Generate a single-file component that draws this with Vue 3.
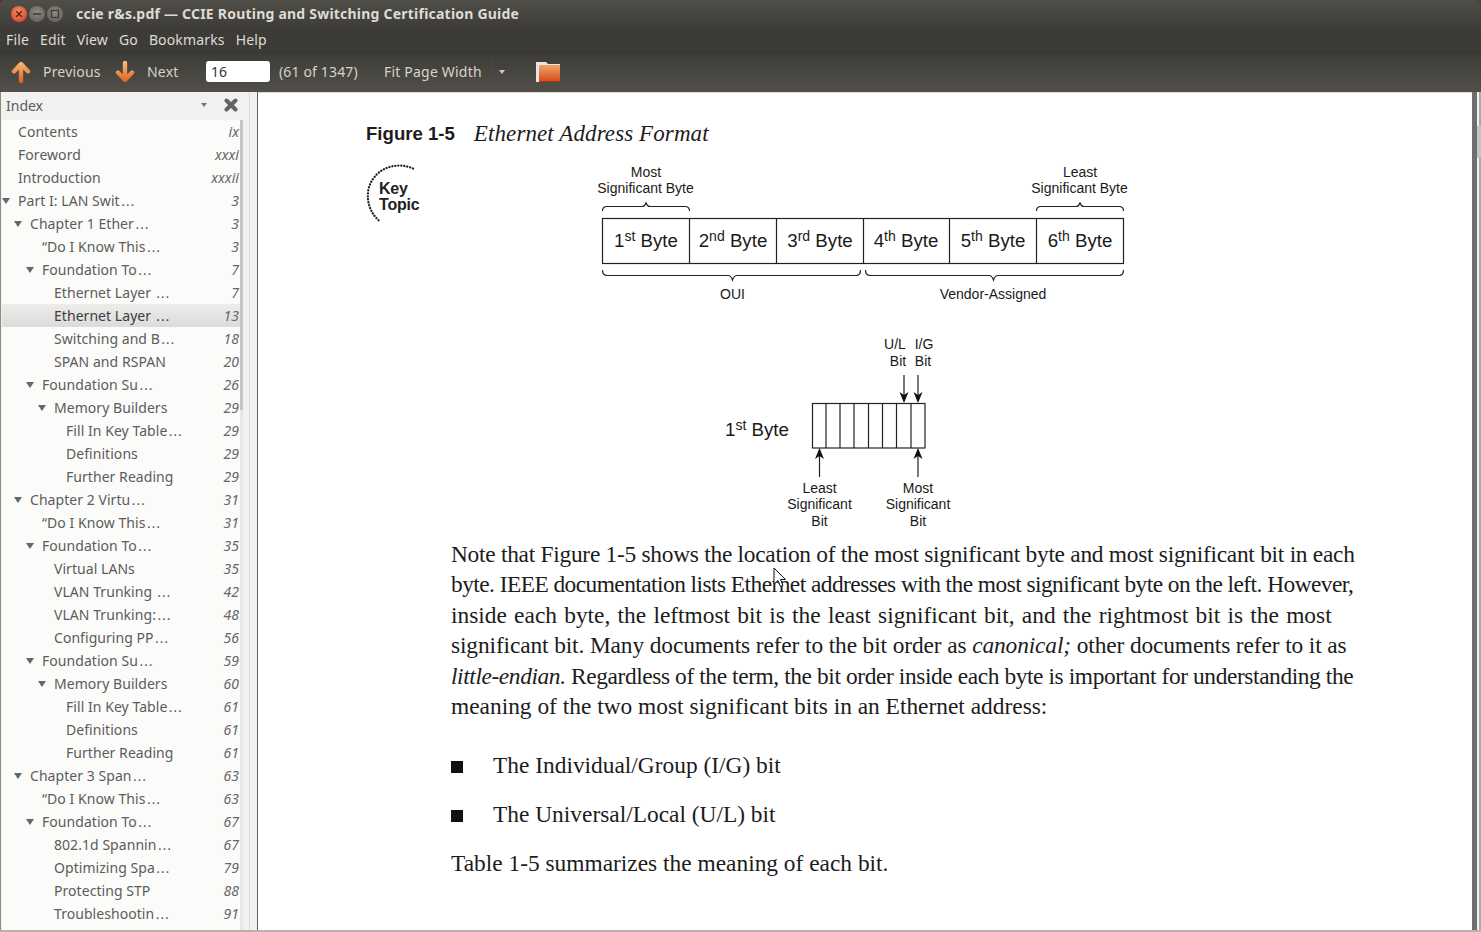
<script setup>
const rows = [
  { d: 0, t: 'Contents', p: 'ix' },
  { d: 0, t: 'Foreword', p: 'xxxi' },
  { d: 0, t: 'Introduction', p: 'xxxii' },
  { d: 0, t: 'Part I: LAN Swit', more: true, p: '3', open: true },
  { d: 1, t: 'Chapter 1 Ether', more: true, p: '3', open: true },
  { d: 2, t: '“Do I Know This', more: true, p: '3' },
  { d: 2, t: 'Foundation To', more: true, p: '7', open: true },
  { d: 3, t: 'Ethernet Layer ', more: true, p: '7' },
  { d: 3, t: 'Ethernet Layer ', more: true, p: '13', sel: true },
  { d: 3, t: 'Switching and B', more: true, p: '18' },
  { d: 3, t: 'SPAN and RSPAN', p: '20' },
  { d: 2, t: 'Foundation Su', more: true, p: '26', open: true },
  { d: 3, t: 'Memory Builders', p: '29', open: true },
  { d: 4, t: 'Fill In Key Table', more: true, p: '29' },
  { d: 4, t: 'Definitions', p: '29' },
  { d: 4, t: 'Further Reading', p: '29' },
  { d: 1, t: 'Chapter 2 Virtu', more: true, p: '31', open: true },
  { d: 2, t: '“Do I Know This', more: true, p: '31' },
  { d: 2, t: 'Foundation To', more: true, p: '35', open: true },
  { d: 3, t: 'Virtual LANs', p: '35' },
  { d: 3, t: 'VLAN Trunking ', more: true, p: '42' },
  { d: 3, t: 'VLAN Trunking:', more: true, p: '48' },
  { d: 3, t: 'Configuring PP', more: true, p: '56' },
  { d: 2, t: 'Foundation Su', more: true, p: '59', open: true },
  { d: 3, t: 'Memory Builders', p: '60', open: true },
  { d: 4, t: 'Fill In Key Table', more: true, p: '61' },
  { d: 4, t: 'Definitions', p: '61' },
  { d: 4, t: 'Further Reading', p: '61' },
  { d: 1, t: 'Chapter 3 Span', more: true, p: '63', open: true },
  { d: 2, t: '“Do I Know This', more: true, p: '63' },
  { d: 2, t: 'Foundation To', more: true, p: '67', open: true },
  { d: 3, t: '802.1d Spannin', more: true, p: '67' },
  { d: 3, t: 'Optimizing Spa', more: true, p: '79' },
  { d: 3, t: 'Protecting STP', p: '88' },
  { d: 3, t: 'Troubleshootin', more: true, p: '91' },
];

const menus = ['File', 'Edit', 'View', 'Go', 'Bookmarks', 'Help'];

const bytes = [
  { x: 646, n: '1', s: 'st' },
  { x: 733, n: '2', s: 'nd' },
  { x: 820, n: '3', s: 'rd' },
  { x: 906, n: '4', s: 'th' },
  { x: 993, n: '5', s: 'th' },
  { x: 1080, n: '6', s: 'th' },
];
const dividers = [689, 776, 863, 949, 1036];
const bits = [826, 840, 854, 868.5, 882.5, 896.5, 911];
</script>

<template>
  <div class="win">
    <header class="chrome">
      <div class="titlebar">
        <div class="btns">
          <svg width="54" height="18" viewBox="0 0 54 18">
            <defs>
              <radialGradient id="red" cx=".45" cy=".35" r=".7">
                <stop offset="0" stop-color="#f28a5c" />
                <stop offset="1" stop-color="#d9482b" />
              </radialGradient>
              <radialGradient id="grey" cx=".5" cy=".4" r=".7">
                <stop offset="0" stop-color="#8e8b83" />
                <stop offset="1" stop-color="#5f5d57" />
              </radialGradient>
            </defs>
            <circle cx="9" cy="9" r="8" fill="url(#red)" />
            <path d="M6.3 6.3 L11.7 11.7 M11.7 6.3 L6.3 11.7" stroke="#5a2012" stroke-width="1.4" />
            <circle cx="27" cy="9" r="8" fill="url(#grey)" />
            <path d="M23 9 H31" stroke="#3c3b37" stroke-width="1.6" />
            <circle cx="45" cy="9" r="8" fill="url(#grey)" />
            <rect x="41.5" y="5.5" width="7" height="7" fill="none" stroke="#3c3b37" stroke-width="1.3" />
          </svg>
        </div>
        <span class="title">ccie r&amp;s.pdf — CCIE Routing and Switching Certification Guide</span>
      </div>
      <nav class="menubar">
        <span v-for="m in menus" :key="m">{{ m }}</span>
      </nav>
      <div class="toolbar">
        <svg class="arrow" width="20" height="24" viewBox="0 0 20 24">
          <defs>
            <linearGradient id="up" gradientUnits="userSpaceOnUse" x1="0" y1="2" x2="0" y2="23">
              <stop offset="0" stop-color="#f9b878" />
              <stop offset="1" stop-color="#dc5f1c" />
            </linearGradient>
          </defs>
          <path d="M10 21 V5 M3 11.5 L10 4 L17 11.5" fill="none" stroke="url(#up)" stroke-width="4.4" stroke-linecap="round" stroke-linejoin="round" />
        </svg>
        <span class="tb-label prev">Previous</span>
        <svg class="arrow" width="20" height="24" viewBox="0 0 20 24">
          <path d="M10 3 V19 M3 12.5 L10 20 L17 12.5" fill="none" stroke="url(#up)" stroke-width="4.4" stroke-linecap="round" stroke-linejoin="round" />
        </svg>
        <span class="tb-label next">Next</span>
        <i class="sep"></i>
        <input class="page-input" value="16" />
        <span class="tb-label count">(61 of 1347)</span>
        <i class="sep"></i>
        <span class="tb-label zoom">Fit Page Width</span>
        <i class="sep small"></i>
        <span class="caret"></span>
        <i class="sep last"></i>
        <svg class="folder" width="24" height="22" viewBox="0 0 24 22">
          <defs>
            <linearGradient id="fold" x1="0" y1="0" x2="0" y2="1">
              <stop offset="0" stop-color="#f2a468" />
              <stop offset="1" stop-color="#d2491a" />
            </linearGradient>
          </defs>
          <path d="M0 1 H10 L12 3 H24 V21 H0 Z" fill="#e9e6e0" />
          <rect x="3" y="4" width="21" height="17" fill="url(#fold)" />
          <rect x="3" y="20" width="21" height="1" fill="#a83a14" />
        </svg>
      </div>
    </header>

    <main class="body">
      <aside class="side">
        <div class="side-head">
          <span class="side-title">Index</span>
          <span class="side-caret"></span>
          <svg class="side-x" width="14" height="14" viewBox="0 0 14 14">
            <path d="M2.5 2.5 L11.5 11.5 M11.5 2.5 L2.5 11.5" stroke="#636361" stroke-width="4" stroke-linecap="round" />
          </svg>
        </div>
        <div class="side-list">
          <div class="tree">
            <div v-for="(r, i) in rows" :key="i" class="row" :class="{ sel: r.sel, ['d' + r.d]: true }">
              <span v-if="r.open" class="tri"></span>
              <span class="lbl">{{ r.t }}<span v-if="r.more" class="ell">…</span></span>
              <em class="pg">{{ r.p }}</em>
            </div>
          </div>
          <div class="tree-scroll"></div>
        </div>
      </aside>

      <section class="doc">
        <div class="page">
          <h2 class="fig-head"><b>Figure 1-5</b><i>Ethernet Address Format</i></h2>
          <svg class="figure" width="800" height="376" viewBox="360 158 800 376">
            <path class="arc" d="M413 168.5 C396 161 374 168 368.5 189 C366 203 371 214 380 221.5" />
            <text class="kt" x="379" y="193.5">Key</text>
            <text class="kt" x="379" y="209.5">Topic</text>

            <text class="s" x="646" y="177" text-anchor="middle">Most</text>
            <text class="s" x="645.5" y="193" text-anchor="middle">Significant Byte</text>
            <text class="s" x="1080" y="177" text-anchor="middle">Least</text>
            <text class="s" x="1079.5" y="193" text-anchor="middle">Significant Byte</text>

            <path class="ln" d="M602.5 211 Q602.5 206.5 607 206.5 H642 Q645 206.5 646 202.5 Q647 206.5 650 206.5 H685 Q689.5 206.5 689.5 211" />
            <path class="ln" d="M1036.5 211 Q1036.5 206.5 1041 206.5 H1076 Q1079 206.5 1080 202.5 Q1081 206.5 1084 206.5 H1119 Q1123.5 206.5 1123.5 211" />

            <rect class="ln" x="602.5" y="218.5" width="521" height="45" />
            <line v-for="d in dividers" :key="d" class="ln" :x1="d + .5" :x2="d + .5" y1="218.5" y2="263.5" />
            <text v-for="b in bytes" :key="b.x" class="b" :x="b.x" y="247" text-anchor="middle">{{ b.n }}<tspan class="sup" dy="-6">{{ b.s }}</tspan><tspan dy="6"> Byte</tspan></text>

            <path class="ln" d="M602.5 270 Q602.5 275.5 607 275.5 H728 Q731 275.5 732.5 280 Q734 275.5 737 275.5 H856 Q860.5 275.5 860.5 270" />
            <path class="ln" d="M865.5 270 Q865.5 275.5 870 275.5 H989 Q992 275.5 993.5 280 Q995 275.5 998 275.5 H1119 Q1123.5 275.5 1123.5 270" />
            <text class="s" x="732.5" y="299" text-anchor="middle">OUI</text>
            <text class="s" x="993" y="299" text-anchor="middle">Vendor-Assigned</text>

            <text class="s" x="895" y="349" text-anchor="middle">U/L</text>
            <text class="s" x="924" y="349" text-anchor="middle">I/G</text>
            <text class="s" x="898" y="366" text-anchor="middle">Bit</text>
            <text class="s" x="923" y="366" text-anchor="middle">Bit</text>
            <path class="ln" d="M904 375 V395 M918 375 V395" />
            <path d="M899.5 392 L904 403 L908.5 392 L904 395 Z M913.5 392 L918 403 L922.5 392 L918 395 Z" fill="#111" />

            <text class="b" x="757" y="436" text-anchor="middle">1<tspan class="sup" dy="-6">st</tspan><tspan dy="6"> Byte</tspan></text>
            <rect class="ln" x="812.5" y="403.5" width="112.5" height="44.5" />
            <line v-for="b in bits" :key="b" class="ln" :x1="b" :x2="b" y1="403.5" y2="448" />

            <path class="ln" d="M819.5 477 V456 M918 477 V456" />
            <path d="M815 459 L819.5 448 L824 459 L819.5 456 Z M913.5 459 L918 448 L922.5 459 L918 456 Z" fill="#111" />

            <text class="s" x="819.5" y="493" text-anchor="middle">Least</text>
            <text class="s" x="819.5" y="509" text-anchor="middle">Significant</text>
            <text class="s" x="819.5" y="526" text-anchor="middle">Bit</text>
            <text class="s" x="918" y="493" text-anchor="middle">Most</text>
            <text class="s" x="918" y="509" text-anchor="middle">Significant</text>
            <text class="s" x="918" y="526" text-anchor="middle">Bit</text>
          </svg>

          <div class="copy">
            <div class="l1">Note that Figure 1-5 shows the location of the most significant byte and most significant bit in each</div>
            <div class="l2">byte. IEEE documentation lists Ethernet addresses with the most significant byte on the left. However,</div>
            <div class="l3">inside each byte, the leftmost bit is the least significant bit, and the rightmost bit is the most</div>
            <div class="l4">significant bit. Many documents refer to the bit order as <i>canonical;</i> other documents refer to it as</div>
            <div class="l5"><i>little-endian.</i> Regardless of the term, the bit order inside each byte is important for understanding the</div>
            <div>meaning of the two most significant bits in an Ethernet address:</div>
            <ul class="bullets">
              <li>The Individual/Group (I/G) bit</li>
              <li>The Universal/Local (U/L) bit</li>
            </ul>
            <div>Table 1-5 summarizes the meaning of each bit.</div>
          </div>
        </div>
        <div class="doc-scroll"><span class="doc-thumb"></span></div>
      </section>
    </main>

    <svg class="cursor" width="14" height="22" viewBox="0 0 14 22">
      <path d="M1 1 V17 L5 13.5 L7.5 19.5 L10 18.5 L7.5 12.5 H12.5 Z" fill="#fff" stroke="#111" stroke-width="1" stroke-linejoin="round" />
    </svg>
  </div>
</template>

<style>
html, body { margin: 0; overflow: hidden; background: #3c3b37; }
</style>

<style scoped>
.win { position: relative; width: 1481px; height: 932px; display: flex; flex-direction: column; overflow: hidden; font-family: "Noto Sans", "Open Sans", sans-serif; border-bottom: 2px solid #b5b3ae; box-sizing: border-box; background: #6e2b2b; }

.chrome { height: 92px; flex: none; color: #dfdbd2; border-radius: 5px 5px 0 0; background: linear-gradient(#4f4e49 0, #3c3b37 30px, #3c3b37 52px, #524f49 92px); }
.titlebar { height: 27px; display: flex; align-items: center; }
.btns { width: 76px; padding-left: 10px; box-sizing: border-box; height: 18px; flex: none; }
.btns svg { display: block; }
.title { font-size: 14px; font-weight: 700; letter-spacing: .22px; white-space: nowrap; }
.menubar { height: 25px; display: flex; align-items: center; gap: 11px; padding-left: 6px; font-size: 14px; letter-spacing: .15px; }
.toolbar { height: 40px; display: flex; align-items: center; padding: 0 0 2px 11px; font-size: 14px; letter-spacing: .2px; border-top: 1px solid #36352f; box-sizing: border-box; }
.arrow { flex: none; }
.tb-label { color: #d6d2c9; white-space: nowrap; }
.prev { margin-left: 12px; width: 72px; }
.next { margin-left: 12px; width: 33px; }
.sep { width: 1px; height: 26px; background: #4a4843; margin: 0 12px 0 13px; flex: none; }
.sep.small { margin: 0 6px 0 10px; }
.sep.last { margin: 0 14px 0 16px; }
.page-input { width: 64px; height: 21px; box-sizing: border-box; border: 0; border-radius: 3px; padding: 0 5px; margin-right: 9px; font: 14px "Noto Sans", sans-serif; color: #333; background: #fff; outline: 0; }
.count { width: 78px; letter-spacing: .15px; }
.zoom { width: 98px; margin-left: 1px; }
.caret { width: 0; height: 0; border: 3px solid transparent; border-top: 4px solid #cfcbc2; border-bottom: 0; flex: none; }

.body { flex: 1; min-height: 0; display: flex; }
.side { width: 258px; flex: none; background: linear-gradient(90deg, #f2f1f0 248px, #dcdbd9 248px, #dcdbd9 249px, #f2f1f0 249px); border-right: 1px solid #5f5e59; border-left: 1px solid #8c8a85; box-sizing: border-box; display: flex; flex-direction: column; }
.side-head { height: 28px; flex: none; display: flex; align-items: center; padding: 0 0 2px 5px; color: #5a5a5a; font-size: 14px; width: 242px; box-sizing: border-box; }
.side-title { flex: 1; }
.side-caret { width: 0; height: 0; border: 3px solid transparent; border-top: 4px solid #777; border-bottom: 0; margin-right: 17px; }
.side-x { margin-right: 5px; }
.side-list { flex: 1; min-height: 0; display: flex; width: 241px; margin-left: 1px; overflow: hidden; }
.tree { width: 238px; background: #fbfbfa; overflow: hidden; }
.tree-scroll { width: 3px; background: linear-gradient(#c6c5c3 0 290px, #e8e7e5 290px); }
.row { position: relative; height: 23px; display: flex; align-items: center; font-size: 14px; letter-spacing: .05px; color: #5c5c5c; padding-right: 1px; box-sizing: border-box; }
.row.sel { background: linear-gradient(#ececea, #dcdbd9); color: #3c3c3c; }
.d0 { padding-left: 16px; }
.d1 { padding-left: 28px; }
.d2 { padding-left: 40px; }
.d3 { padding-left: 52px; }
.d4 { padding-left: 64px; }
.lbl { flex: 1; white-space: pre; }
.ell { font-family: "DejaVu Sans", sans-serif; margin-left: 1px; }
.pg { font-style: italic; color: #666; }
.tri { position: absolute; width: 0; height: 0; border: 4.5px solid transparent; border-top: 6px solid #666; border-bottom: 0; margin-left: -16px; }

.doc { flex: 1; min-width: 0; position: relative; background: #fff; display: flex; box-shadow: inset 0 1px #dcdad6; }
.page { flex: 1; min-width: 0; padding: 28px 0 0 108px; box-sizing: border-box; color: #1c1c1c; }
.fig-head { margin: 0; height: 27px; display: flex; align-items: center; gap: 19px; font-weight: 400; }
.fig-head b { font: 700 18.6px "Liberation Sans", sans-serif; }
.fig-head i { font: italic 23px "Liberation Serif", serif; letter-spacing: .1px; }
.figure { display: block; margin: 11px 0 0 -6px; }
.arc { fill: none; stroke: #222; stroke-width: 2.3; stroke-dasharray: 0.1 2.9; stroke-linecap: round; }
.s { font: 14px "Liberation Sans", sans-serif; fill: #1a1a1a; }
.b { font: 18.7px "Liberation Sans", sans-serif; fill: #1a1a1a; }
.sup { font-size: 14px; }
.kt { font: 700 16px "Liberation Sans", sans-serif; fill: #222; letter-spacing: -.2px; }
.ln { fill: none; stroke: #222; stroke-width: 1.2; }
.copy { margin: 5px 0 0 85px; font: 23.4px/30.4px "Liberation Serif", serif; white-space: nowrap; }
.l1 { letter-spacing: -.27px; }
.l2 { letter-spacing: -.55px; }
.l3 { word-spacing: 1.4px; }
.l4 { letter-spacing: -.12px; }
.l5 { letter-spacing: -.4px; }
.bullets { list-style: none; margin: 29px 0 0; padding: 0; }
.bullets li { position: relative; padding-left: 42px; margin-bottom: 18.4px; }
.bullets li::before { content: ""; position: absolute; left: 0; top: 11px; width: 12px; height: 12px; background: #111; }
.doc-scroll { width: 9px; flex: none; background: linear-gradient(90deg, #f2f1f0 2px, #aaa 2px); border-left: 5px solid #6f6f6f; box-sizing: border-box; }
.doc-thumb { display: block; height: 32px; margin-top: 34px; background: #c4c3c1; }

.cursor { position: absolute; left: 773px; top: 567px; }
</style>
